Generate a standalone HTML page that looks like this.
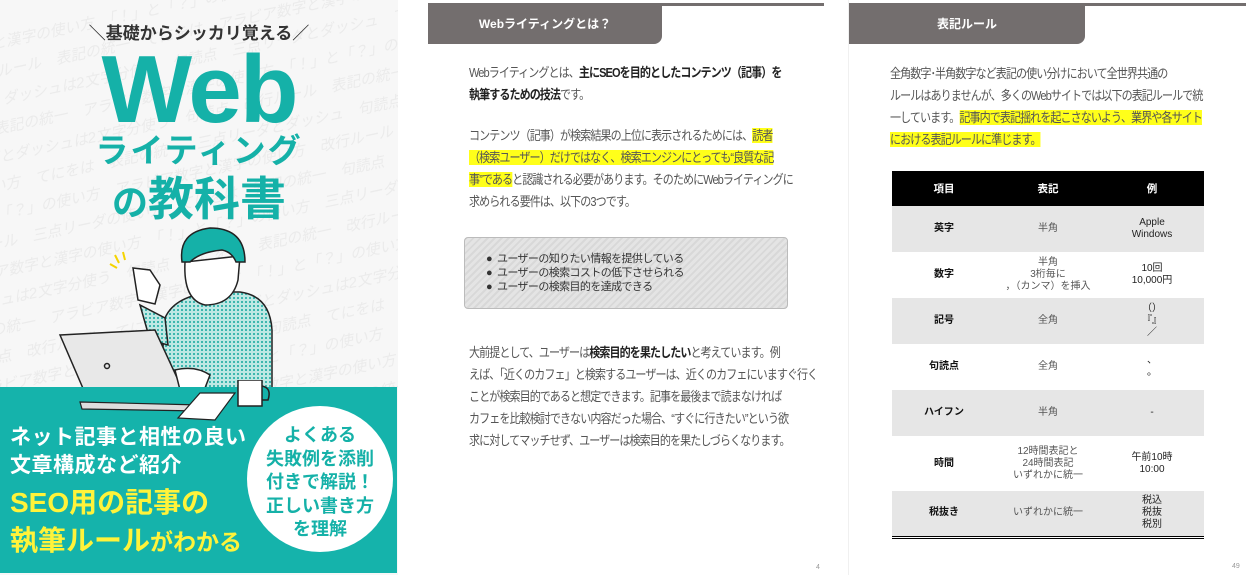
<!DOCTYPE html>
<html><head><meta charset="utf-8"><style>
*{margin:0;padding:0;box-sizing:border-box}
body{width:1246px;height:575px;overflow:hidden;background:#fff;font-family:"Liberation Sans","Noto Sans CJK JP",sans-serif;position:relative}
.abs{position:absolute}
.cover{left:0;top:0;width:398px;height:575px;background:#f7f7f7;overflow:hidden}
.bgtxt{color:#ebebeb;font-size:15px;line-height:28px;white-space:nowrap;transform:rotate(-12deg);left:-60px;top:-20px;font-style:italic}
.teal{color:#15b1a8}
.tab{background:#736e6e;color:#fff;font-weight:bold;font-size:12px;border-bottom-right-radius:8px;display:flex;align-items:center;justify-content:center}
.p{color:#555;font-size:13px;line-height:22px;white-space:nowrap;letter-spacing:-1.1px;transform:scaleX(0.85);transform-origin:left top}
.p b{color:#222}
.hl{background:#ffff1a}
table{border-collapse:collapse;font-size:10px;text-align:center}
td,th{height:46px;line-height:12px}
th{background:#000;color:#fff;height:35px;font-size:10.5px}
td.k{font-weight:bold;color:#111;width:104px}
td.v{color:#555;width:104px}
td.e{color:#222;width:104px}
tr.g td{background:#e6e6e6}
</style></head><body>

<div class="abs cover">
 <div class="abs bgtxt">アラビア数字と漢字の使い方　「！」と「？」の使い方　三点リーダとダッシュは2文字分使う<br>句読点　改行ルール　表記の統一　てにをは　アラビア数字と漢字の使い方<br>表記の統一　ダッシュは2文字分使う　句読点　三点リーダとダッシュ　てにをは<br>てにをは　表記の統一　アラビア数字と漢字の使い方　「！」と「？」の使い方<br>三点リーダとダッシュは2文字分使う　句読点　改行ルール　表記の統一<br>漢字の使い方　てにをは　表記の統一　三点リーダとダッシュ　句読点<br>「！」と「？」の使い方　アラビア数字と漢字の使い方　改行ルール<br>改行ルール　三点リーダの使い方　てにをは　表記の統一　句読点<br>アラビア数字と漢字の使い方　「！」と「？」の使い方　三点リーダ<br>ダッシュは2文字分使う　句読点　てにをは　表記の統一　改行ルール<br>表記の統一　アラビア数字　漢字の使い方　「！」と「？」の使い方<br>句読点　改行ルール　てにをは　三点リーダとダッシュは2文字分使う<br>アラビア数字と漢字の使い方　表記の統一　句読点　てにをは<br>三点リーダとダッシュ　改行ルール　「！」と「？」の使い方<br>てにをは　表記の統一　句読点　アラビア数字と漢字の使い方<br>改行ルール　三点リーダとダッシュは2文字分使う　表記の統一</div>
 <div class="abs" style="left:0;width:398px;top:19px;text-align:center;font-size:17px;font-weight:bold;color:#333">＼基礎からシッカリ覚える／</div>
 <div class="abs teal" style="left:0;width:398px;top:40px;text-align:center;font-size:96px;font-weight:bold;letter-spacing:-2px;line-height:100px">Web</div>
 <div class="abs teal" style="left:0;width:398px;top:131px;text-align:center;font-size:33px;font-weight:bold;letter-spacing:2px;line-height:40px">ライティング</div>
 <div class="abs teal" style="left:0;width:398px;top:172px;text-align:center;font-size:46px;font-weight:bold;line-height:54px"><span style="font-size:36px">の</span>教科書</div>
 <svg class="abs" style="left:0;top:220px" width="398" height="200" viewBox="0 220 398 200">
  <defs><pattern id="dots" width="4" height="4" patternUnits="userSpaceOnUse"><rect width="4" height="4" fill="#bfe8e4"/><circle cx="2" cy="2" r="1" fill="#15a79f"/></pattern></defs>
  <path d="M160 390 L165 318 Q175 295 215 292 L240 292 Q270 296 272 330 L272 392 Z" fill="url(#dots)" stroke="#222" stroke-width="1.5"/>
  <path d="M140 305 L150 340 L168 345 L165 318 Z" fill="url(#dots)" stroke="#222" stroke-width="1.5"/>
  <path d="M133 268 L138 300 L155 304 L160 285 L150 270 Z" fill="#fff" stroke="#222" stroke-width="1.5"/>
  <path d="M185 262 Q183 300 205 305 Q232 305 238 280 L240 256 Z" fill="#fff" stroke="#222" stroke-width="1.5"/>
  <path d="M182 262 Q178 232 210 228 Q245 228 245 262 L236 262 Q232 252 222 250 Q200 252 190 262 Z" fill="#15b1a8" stroke="#222" stroke-width="1.5"/>
  <path d="M115 255 l4 8 M123 252 l2 8 M110 264 l7 4" stroke="#f5d400" stroke-width="2"/>
  <path d="M60 335 L155 330 L185 395 L88 400 Z" fill="#e8e8e8" stroke="#222" stroke-width="1.5"/>
  <circle cx="107" cy="366" r="2.5" fill="none" stroke="#222" stroke-width="1.5"/>
  <path d="M175 370 Q195 365 210 375 L205 388 L180 390Z" fill="#fff" stroke="#222" stroke-width="1.5"/>
  <line x1="195" y1="388" x2="310" y2="388" stroke="#222" stroke-width="1.5"/>
 </svg>
 <div class="abs" style="left:0;top:387px;width:397px;height:186px;background:#15b3ab"></div>
 <svg class="abs" style="left:0;top:380px" width="398" height="50"><path d="M80 22 L200 25 L200 31 L82 29Z" fill="#ddd" stroke="#222" stroke-width="1.2"/><path d="M200 13 L235 13 L215 40 L178 38 Z" fill="#fff" stroke="#222" stroke-width="1.2"/><rect x="238" y="0" width="24" height="26" fill="#fff" stroke="#222" stroke-width="1.5"/><path d="M262 6 q10 2 6 14 l-6 0" fill="none" stroke="#222" stroke-width="1.5"/></svg>
 <div class="abs" style="left:10px;top:424px;color:#fff;font-size:21px;font-weight:bold;line-height:28px;letter-spacing:0.5px">ネット記事と相性の良い<br>文章構成など紹介</div>
 <div class="abs" style="left:10px;top:484px;color:#fff33a;font-size:28px;font-weight:bold;line-height:38px">SEO用の記事の<br>執筆ルール<span style="font-size:23px">がわかる</span></div>
 <div class="abs" style="left:247px;top:406px;width:146px;height:146px;border-radius:50%;background:#fff"></div>
 <div class="abs teal" style="left:247px;top:424px;width:146px;text-align:center;font-size:18px;font-weight:bold;line-height:23.5px">よくある<br>失敗例を添削<br>付きで解説！<br>正しい書き方<br>を理解</div>
</div>

<!-- page 4 -->
<div class="abs" style="left:428px;top:3px;width:396px;height:3px;background:#736e6e"></div>
<div class="abs tab" style="left:428px;top:3px;width:234px;height:41px">Webライティングとは？</div>
<div class="abs p" style="left:469px;top:62px">Webライティングとは、<b>主にSEOを目的としたコンテンツ（記事）を</b><br><b>執筆するための技法</b>です。</div>
<div class="abs p" style="left:469px;top:125px">コンテンツ（記事）が検索結果の上位に表示されるためには、<span class="hl">読者</span><br><span class="hl">（検索ユーザー）だけではなく、検索エンジンにとっても“良質な記</span><br><span class="hl">事”である</span>と認識される必要があります。そのためにWebライティングに<br>求められる要件は、以下の3つです。</div>
<div class="abs" style="left:464px;top:237px;width:324px;height:72px;border:1px solid #bbb;border-radius:4px;background:repeating-linear-gradient(135deg,#d8d8d8 0 2px,#e4e4e4 2px 5px)"></div>
<div class="abs" style="left:486px;top:252px;font-size:11px;line-height:14px;color:#333;letter-spacing:-0.6px">●&nbsp; ユーザーの知りたい情報を提供している<br>●&nbsp; ユーザーの検索コストの低下させられる<br>●&nbsp; ユーザーの検索目的を達成できる</div>
<div class="abs p" style="left:469px;top:342px">大前提として、ユーザーは<b>検索目的を果たしたい</b>と考えています。例<br>えば、「近くのカフェ」と検索するユーザーは、近くのカフェにいますぐ行く<br>ことが検索目的であると想定できます。記事を最後まで読まなければ<br>カフェを比較検討できない内容だった場合、“すぐに行きたい”という欲<br>求に対してマッチせず、ユーザーは検索目的を果たしづらくなります。</div>
<div class="abs" style="left:816px;top:564px;font-size:7px;color:#999">4</div>
<div class="abs" style="left:848px;top:0;width:1px;height:575px;background:#f0f0f0"></div>

<!-- page 49 -->
<div class="abs" style="left:849px;top:3px;width:397px;height:3px;background:#736e6e"></div>
<div class="abs tab" style="left:849px;top:3px;width:236px;height:41px">表記ルール</div>
<div class="abs p" style="left:890px;top:63px">全角数字･半角数字など表記の使い分けにおいて全世界共通の<br>ルールはありませんが、多くのWebサイトでは以下の表記ルールで統<br>一しています。<span class="hl">記事内で表記揺れを起こさないよう、業界や各サイト</span><br><span class="hl">における表記ルールに準じます。</span></div>
<table class="abs" style="left:892px;top:171px;width:312px;border-bottom:3px double #000">
<tr><th>項目</th><th>表記</th><th>例</th></tr>
<tr class="g"><td class="k">英字</td><td class="v">半角</td><td class="e">Apple<br>Windows</td></tr>
<tr><td class="k">数字</td><td class="v">半角<br>3桁毎に<br>，（カンマ）を挿入</td><td class="e">10回<br>10,000円</td></tr>
<tr class="g"><td class="k">記号</td><td class="v">全角</td><td class="e">（）<br>『』<br>／</td></tr>
<tr><td class="k">句読点</td><td class="v">全角</td><td class="e">、<br>。</td></tr>
<tr class="g"><td class="k">ハイフン</td><td class="v">半角</td><td class="e">-</td></tr>
<tr><td class="k" style="height:55px">時間</td><td class="v">12時間表記と<br>24時間表記<br>いずれかに統一</td><td class="e">午前10時<br>10:00</td></tr>
<tr class="g"><td class="k">税抜き</td><td class="v">いずれかに統一</td><td class="e">税込<br>税抜<br>税別</td></tr>
</table>
<div class="abs" style="left:1232px;top:563px;font-size:7px;color:#999">49</div>
</body></html>
